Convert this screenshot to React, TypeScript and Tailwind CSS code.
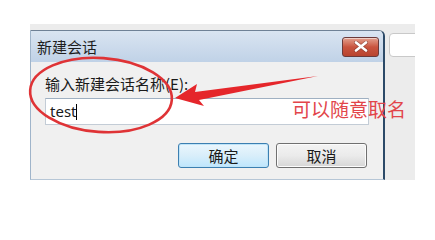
import React from 'react';

const cjk = '"Noto Sans CJK SC", "Noto Sans", sans-serif';

function CloseButton() {
  return (
    <div className="w-[37px] h-[20px] rounded-[3px] border border-[#6b3a3a] bg-gradient-to-b from-[#e2a08f] via-[#c9543f] to-[#b8442f] flex items-center justify-center shadow-[inset_0_1px_0_rgba(255,255,255,0.5)]">
      <svg width="14" height="11" viewBox="0 0 14 11">
        <path d="M2 1.5 L12 9.5 M12 1.5 L2 9.5" stroke="#3a1a1a" strokeWidth="4" strokeLinecap="round" opacity="0.35" />
        <path d="M2 1.5 L12 9.5 M12 1.5 L2 9.5" stroke="#ffffff" strokeWidth="2.6" strokeLinecap="round" />
      </svg>
    </div>
  );
}

export default function App() {
  return (
    <div
      className="relative w-[435px] h-[203px] bg-white overflow-hidden"
      style={{ fontFamily: cjk }}
    >
      {/* backdrop region behind the dialog */}
      <div className="ml-[30px] mt-[24px] w-[385px] h-[156px] bg-[#ececec] pt-[6px] flex overflow-hidden">
        {/* dialog */}
        <div className="w-[355px] h-[150px] shrink-0 flex flex-col rounded-tr-[6px] border-l border-[#9fb4ca] border-r-2 border-r-[#2c4a68] border-t border-t-[#6f8196] border-b border-b-[#b6c6d6] overflow-hidden">
          {/* title bar */}
          <div className="h-[31px] flex items-center justify-between pl-[6px] pr-[4px] bg-gradient-to-b from-[#d9e4f1] to-[#c0d2e7]">
            <span className="text-[15px] text-[#1e1e1e] leading-none">新建会话</span>
            <CloseButton />
          </div>
          {/* body */}
          <div className="flex-1 bg-[#f0f0f0] flex flex-col pl-[14px] pr-[14px]">
            <div className="mt-[14px] text-[15px] leading-[16px] text-[#1a1a1a]">输入新建会话名称(E):</div>
            <div className="mt-[6px] w-[324px] h-[27px] bg-white border border-[#c3ccd6] border-t-[#9fb0c2] flex items-center pl-[4px]">
              <span className="text-[15px] text-[#1a1a1a] leading-none" style={{ fontFamily: '"Noto Sans", sans-serif' }}>
                test
              </span>
              <span className="w-px h-[16px] bg-black" />
            </div>
            <div className="mt-[18px] flex justify-end gap-[7px] pr-[2px]">
              <button className="w-[91px] h-[25px] rounded-[3px] border border-[#3c7fb1] bg-gradient-to-b from-[#eaf6fd] via-[#d9eefa] to-[#bee6fd] text-[15px] text-[#1a1a1a] leading-none shadow-[inset_0_0_0_1px_#bfe4f8]">
                确定
              </button>
              <button className="w-[91px] h-[25px] rounded-[3px] border border-[#707070] bg-gradient-to-b from-[#f3f3f3] via-[#ebebeb] to-[#d6d6d6] text-[15px] text-[#1a1a1a] leading-none shadow-[inset_0_0_0_1px_#fcfcfc]">
                取消
              </button>
            </div>
          </div>
        </div>
        {/* window behind */}
        <div className="ml-[4px] mt-[3px] w-[34px] h-[24px] shrink-0 rounded-[4px] border border-[#c9c9c9] bg-white" />
      </div>

      {/* annotation: ellipse and arrow */}
      <svg className="absolute left-0 top-0 pointer-events-none" width="435" height="203" viewBox="0 0 435 203">
        <ellipse
          cx="101"
          cy="95"
          rx="71"
          ry="37"
          transform="rotate(4 101 95)"
          fill="none"
          stroke="#df3336"
          strokeWidth="2.6"
        />
        <polygon points="175,98 197,84 195,92 318,76 199,100 204,106" fill="#e5262b" />
      </svg>

      {/* annotation text */}
      <div className="absolute left-[292px] top-[98px] text-[19px] leading-[22px] text-[#e2454a]">
        可以随意取名
      </div>
    </div>
  );
}
